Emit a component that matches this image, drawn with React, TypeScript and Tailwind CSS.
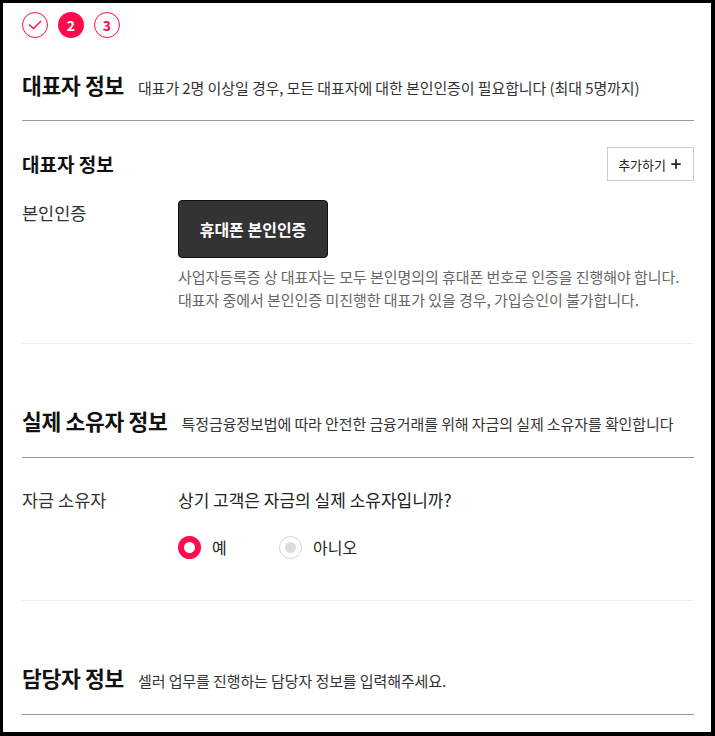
import { Plus } from 'lucide-react';

const font = { fontFamily: '"Noto Sans CJK KR", "Noto Sans", sans-serif' };

function SectionTitle({ title, desc, last }: { title: string; desc: string; last?: boolean }) {
  return (
    <div className={`flex items-baseline gap-[14px] border-b border-[#999] ${last ? 'pb-[20px]' : 'pb-[19px]'}`}>
      <h2 className="text-[21.5px] font-bold tracking-[-0.3px] text-[#111]">{title}</h2>
      <p className="text-[15px] tracking-[-0.1px] text-[#333]">{desc}</p>
    </div>
  );
}

export default function App() {
  return (
    <div
      className="w-[715px] h-[736px] overflow-hidden bg-white border-l-[3px] border-t-[3px] border-r-4 border-b-4 border-black"
      style={font}
    >
      <div className="pl-[19px] pr-[17px]">
        {/* 단계 표시 */}
        <div className="flex gap-[10px] pt-[9px]">
          <div className="w-[26px] h-[26px] rounded-full border border-[#ff0a4b] flex items-center justify-center">
            <svg width="14" height="10" viewBox="0 0 14 10" fill="none">
              <path d="M1 4.5 L5.5 8.5 L13 1" stroke="#ff0a4b" strokeWidth="1.4" />
            </svg>
          </div>
          <div className="w-[26px] h-[26px] rounded-full bg-[#ff0a4b] text-white text-[14px] font-bold flex items-center justify-center">
            2
          </div>
          <div className="w-[26px] h-[26px] rounded-full border border-[#ff0a4b] text-[#ff0a4b] text-[14px] font-bold flex items-center justify-center">
            3
          </div>
        </div>

        {/* 대표자 정보 */}
        <div className="pt-[31px]">
          <SectionTitle title="대표자 정보" desc="대표가 2명 이상일 경우, 모든 대표자에 대한 본인인증이 필요합니다 (최대 5명까지)" />
        </div>

        <div className="border-b border-[#eee] pb-[32px]">
          <div className="flex items-center justify-between pt-[26px]">
            <h3 className="text-[19px] font-bold text-[#111]">대표자 정보</h3>
            <button className="h-[34px] px-[10px] border border-[#ccc] bg-white text-[13px] text-[#222] flex items-center gap-[3px]">
              추가하기
              <Plus size={14} strokeWidth={3} />
            </button>
          </div>
          <div className="flex pt-[19px]">
            <div className="w-[156px] text-[17.5px] text-[#333]">본인인증</div>
            <div>
              <button className="w-[150px] h-[58px] rounded-[4px] bg-[#333] border border-[#111] text-white text-[16px] font-bold">
                휴대폰 본인인증
              </button>
              <p className="mt-[7px] text-[15px] leading-[23px] tracking-[-0.05px] text-[#666]">
                사업자등록증 상 대표자는 모두 본인명의의 휴대폰 번호로 인증을 진행해야 합니다.
                <br />
                대표자 중에서 본인인증 미진행한 대표가 있을 경우, 가입승인이 불가합니다.
              </p>
            </div>
          </div>
        </div>

        {/* 실제 소유자 정보 */}
        <div className="pt-[61px]">
          <SectionTitle title="실제 소유자 정보" desc="특정금융정보법에 따라 안전한 금융거래를 위해 자금의 실제 소유자를 확인합니다" />
        </div>

        <div className="border-b border-[#eee] pb-[41px]">
          <div className="flex pt-[29px]">
            <div className="w-[156px] text-[17.5px] text-[#333]">자금 소유자</div>
            <div>
              <p className="text-[17px] text-[#222]">상기 고객은 자금의 실제 소유자입니까?</p>
              <div className="flex items-center pt-[23px]">
                <label className="flex items-center gap-[11px] w-[101px]">
                  <span className="w-[23px] h-[23px] rounded-full border-[6px] border-[#ff0a4b] bg-white" />
                  <span className="text-[16px] text-[#222]">예</span>
                </label>
                <label className="flex items-center gap-[11px]">
                  <span className="w-[23px] h-[23px] rounded-full border border-[#d5d5d5] bg-white flex items-center justify-center">
                    <span className="w-[11px] h-[11px] rounded-full bg-[#ddd]" />
                  </span>
                  <span className="text-[16px] text-[#222]">아니오</span>
                </label>
              </div>
            </div>
          </div>
        </div>

        {/* 담당자 정보 */}
        <div className="pt-[61px]">
          <SectionTitle title="담당자 정보" desc="셀러 업무를 진행하는 담당자 정보를 입력해주세요." last />
        </div>
      </div>
    </div>
  );
}
